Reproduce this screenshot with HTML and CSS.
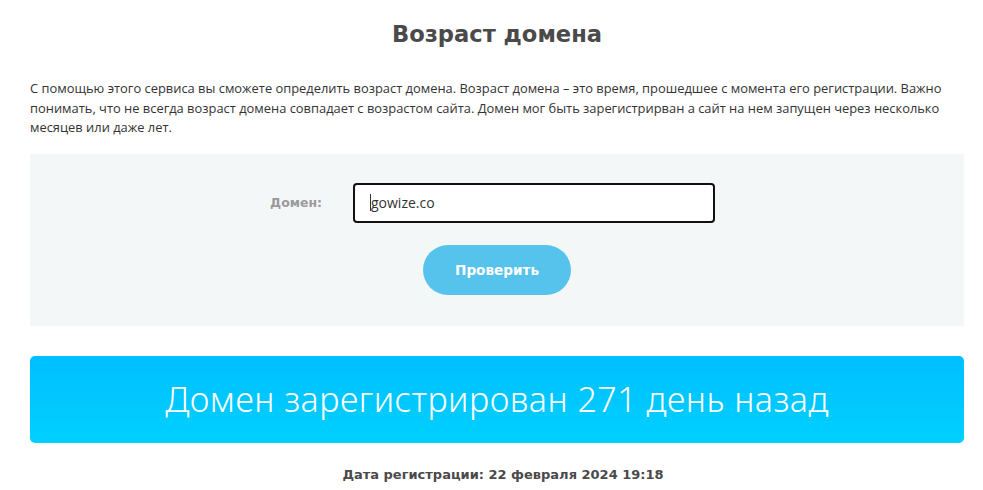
FILE: index.html
```html
<!DOCTYPE html>
<html lang="ru">
<head>
<meta charset="utf-8">
<title>Возраст домена</title>
<link rel="stylesheet" href="styles.css">
</head>
<body>
<main class="page">
  <h1 class="title">Возраст домена</h1>
  <p class="intro">С помощью этого сервиса вы сможете определить возраст домена. Возраст домена – это время, прошедшее с момента его регистрации. Важно понимать, что не всегда возраст домена совпадает с возрастом сайта. Домен мог быть зарегистрирван а сайт на нем запущен через несколько месяцев или даже лет.</p>
  <form class="check-form">
    <div class="field-row">
      <label class="field-label" for="domain">Домен:</label>
      <div class="input-box"><span class="caret"></span><span class="input-value">gowize.co</span></div>
    </div>
    <button class="btn" type="button">Проверить</button>
  </form>
  <div class="result">Домен зарегистрирован 271 день назад</div>
  <p class="reg-date">Дата регистрации: 22 февраля 2024 19:18</p>
</main>
</body>
</html>
```

FILE: styles.css
```css
html, body {
  margin: 0;
  padding: 0;
  background: #ffffff;
}
.page {
  width: 934px;
  margin-left: 30px;
  display: flex;
  flex-direction: column;
}
.title {
  margin: 19px 0 0;
  height: 30px;
  line-height: 30px;
  text-align: center;
  font-family: "DejaVu Sans", sans-serif;
  font-weight: 700;
  font-size: 22.6px;
  color: #4a4a4a;
}
.intro {
  margin: 30px 0 0;
  font-family: "Open Sans", sans-serif;
  font-size: 12.9px;
  line-height: 19.5px;
  color: #333333;
}
.check-form {
  margin-top: 16px;
  height: 172px;
  box-sizing: border-box;
  background: #f4f7f8;
  padding-top: 29px;
  display: flex;
  flex-direction: column;
  align-items: center;
}
.field-row {
  align-self: flex-start;
  display: flex;
  align-items: center;
  margin-left: 240px;
}
.field-label {
  width: 83px;
  font-family: "DejaVu Sans", sans-serif;
  font-weight: 700;
  font-size: 12.5px;
  color: #9a9a9a;
}
.input-box {
  width: 362px;
  height: 40px;
  box-sizing: border-box;
  border: 2px solid #111111;
  border-radius: 4px;
  background: #ffffff;
  display: flex;
  align-items: center;
  padding-left: 15px;
  font-family: "Open Sans", sans-serif;
  font-size: 14px;
  color: #333333;
}
.caret {
  width: 1px;
  height: 17px;
  background: #333;
}
.btn {
  margin-top: 22px;
  width: 148px;
  height: 50px;
  border: none;
  border-radius: 25px;
  background: #55c3ec;
  color: #ffffff;
  font-family: "DejaVu Sans", sans-serif;
  font-weight: 700;
  font-size: 13.6px;
}
.result {
  margin-top: 30px;
  height: 87px;
  border-radius: 5px;
  background: linear-gradient(#00bfff, #00d0ff);
  color: #ffffff;
  font-family: "Noto Sans", sans-serif;
  font-weight: 300;
  font-size: 34px;
  letter-spacing: 0.5px;
  display: flex;
  align-items: center;
  justify-content: center;
}
.reg-date {
  margin: 24px 0 0;
  padding-left: 12px;
  text-align: center;
  font-family: "DejaVu Sans", sans-serif;
  font-weight: 700;
  font-size: 13px;
  color: #4a4a4a;
}
```
